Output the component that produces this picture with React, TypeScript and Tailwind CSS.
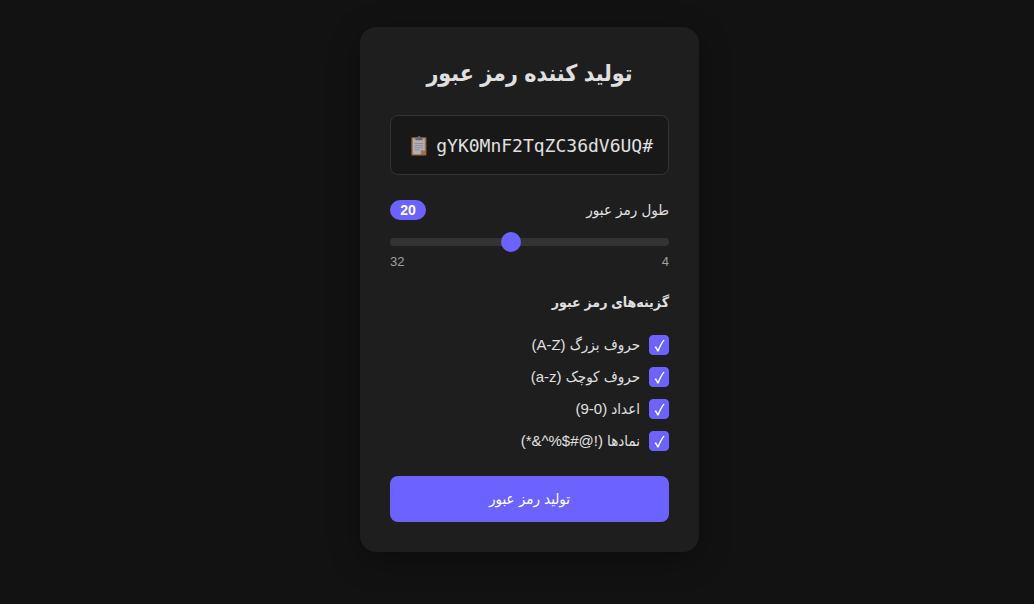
import { useState } from "react";

const options = [
  { id: "upper", label: "حروف بزرگ (A-Z)" },
  { id: "lower", label: "حروف کوچک (a-z)" },
  { id: "digits", label: "اعداد (0-9)" },
  { id: "symbols", label: "نمادها (!@#$%^&*)" },
];

function ClipboardIcon() {
  return (
    <svg width="18" height="20" viewBox="0 0 18 20" aria-hidden="true">
      <rect x="1.4" y="1.2" width="15" height="18.4" rx="0.8" fill="#a06b36" />
      <path d="M2.8 2.4h12v11.800l-4 4h-8z" fill="#b1b0b6" />
      <path d="M14.800 14.200l-4 4v-3.200a.8.8 0 0 1 .8-.8z" fill="#8b7468" />
      <path d="M5.400 1.400h2.100a1.500 1.500 0 0 1 3 0h2.100v2.800H5.400z" fill="#66666b" />
      <path d="M4.500 7.500h8.800M4.500 9.600h8.800M4.500 11.700h8.800M4.500 13.800h5" stroke="#8b8a91" strokeWidth="0.9" />
    </svg>
  );
}

function Option({ id, label }: { id: string; label: string }) {
  return (
    <div className="flex h-5 items-center gap-[9px]">
      <span className="grid size-5 shrink-0">
        <input
          id={id}
          type="checkbox"
          defaultChecked
          className="peer col-start-1 row-start-1 size-5 appearance-none rounded border border-[#444] bg-[#333] checked:border-[#6c63ff] checked:bg-[#6c63ff]"
        />
        <svg
          viewBox="0 0 20 20"
          className="pointer-events-none invisible col-start-1 row-start-1 size-5 peer-checked:visible"
          aria-hidden="true"
        >
          <path d="M5.500 12l1.500-.8 1.900 3C10.500 10.700 12.400 7.300 14.400 4.700l1.200.2C13.200 8.500 11.200 12.300 9.600 16.500H8.400C7.600 14.900 6.700 13.400 5.500 12z" fill="#fff" />
        </svg>
      </span>
      <label htmlFor={id} className="text-[15px] leading-5">
        {label}
      </label>
    </div>
  );
}

export default function App() {
  const [length, setLength] = useState(20);
  return (
    <div
      dir="rtl"
      className="flex min-h-screen items-center justify-center bg-[#121212] pb-[25px] pl-[25px] font-['Liberation_Sans','DejaVu_Sans_Condensed','DejaVu_Sans',sans-serif] text-[#e0e0e0]"
    >
      <main className="w-full max-w-[339px] rounded-2xl bg-[#1e1e1e] p-[30px] shadow-[0_8px_32px_rgba(0,0,0,0.3)]">
        <h1 className="text-center text-[23px] leading-8 font-bold">تولید کننده رمز عبور</h1>
        <div className="mt-[26px] flex h-[60px] items-center justify-between rounded-lg border border-[#333] bg-[#181818] px-[15px] pt-0.5">
          <output dir="ltr" className="font-['DejaVu_Sans_Mono',monospace] text-[18px] leading-6">
            gYK0MnF2TqZC36dV6UQ#
          </output>
          <button type="button" aria-label="کپی" className="px-1">
            <ClipboardIcon />
          </button>
        </div>
        <div className="mt-[25px] flex h-5 items-center justify-between">
          <label htmlFor="length" className="text-[15px] leading-5">
            طول رمز عبور
          </label>
          <span className="w-9 rounded-full bg-[#6c63ff] text-center text-sm leading-5 font-bold text-white">
            {length}
          </span>
        </div>
        <input
          id="length"
          type="range"
          min={4}
          max={32}
          value={length}
          onChange={(e) => setLength(Number(e.target.value))}
          className="mt-[18px] block h-2 w-full appearance-none rounded bg-[#333] [&::-webkit-slider-thumb]:size-5 [&::-webkit-slider-thumb]:appearance-none [&::-webkit-slider-thumb]:rounded-full [&::-webkit-slider-thumb]:bg-[#6c63ff]"
        />
        <div className="mt-1.5 flex justify-between text-[13px] leading-5 text-[#a0a0a0]">
          <span>4</span>
          <span>32</span>
        </div>
        <h2 className="mt-[18px] text-[14px] leading-6 font-bold">گزینه‌های رمز عبور</h2>
        <div className="mt-[21px] flex flex-col gap-3">
          {options.map((o) => (
            <Option key={o.id} id={o.id} label={o.label} />
          ))}
        </div>
        <button
          type="button"
          className="mt-[25px] h-[46px] w-full rounded-lg bg-[#6c63ff] text-[15px] leading-5 text-white"
        >
          تولید رمز عبور
        </button>
      </main>
    </div>
  );
}
